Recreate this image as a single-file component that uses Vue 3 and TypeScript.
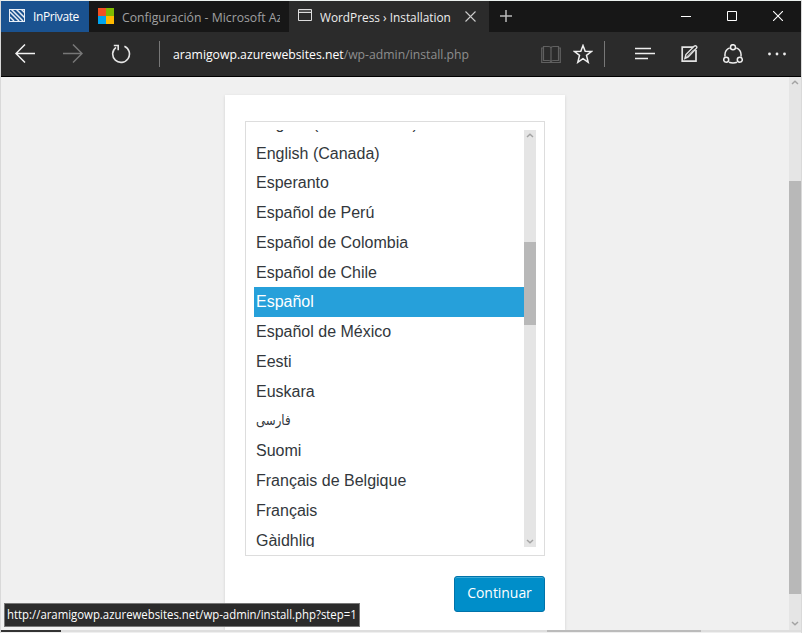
<script setup lang="ts">
interface Language {
  label: string
  kind?: 'selected' | 'arabic'
}

const languages: Language[] = [
  { label: 'English (New Zealand)' },
  { label: 'English (Canada)' },
  { label: 'Esperanto' },
  { label: 'Español de Perú' },
  { label: 'Español de Colombia' },
  { label: 'Español de Chile' },
  { label: 'Español', kind: 'selected' },
  { label: 'Español de México' },
  { label: 'Eesti' },
  { label: 'Euskara' },
  { label: 'فارسی', kind: 'arabic' },
  { label: 'Suomi' },
  { label: 'Français de Belgique' },
  { label: 'Français' },
  { label: 'Gàidhlig' },
]
</script>

<template>
  <div class="window">
    <header class="tabs">
      <div class="private">
        <svg class="hatch" width="16" height="13" viewBox="0 0 16 13">
          <rect x=".5" y=".5" width="15" height="12" fill="none" stroke="#e8eef6" />
          <path d="M1 8l4 4M1 3l9 9M2 0l12 12M7 0l9 9M12 0l4 4" stroke="#e8eef6" stroke-width="1.5" />
        </svg>
        <span>InPrivate</span>
      </div>
      <div class="tab azure">
        <div class="ms"><i class="r" /><i class="g" /><i class="b" /><i class="y" /></div>
        <div class="azure-title"><span>Configuración - Microsoft Azure</span></div>
      </div>
      <div class="tab current">
        <svg class="page-icon" width="14" height="12" viewBox="0 0 14 12" fill="none" stroke="#ddd">
          <path d="M.5 .5h13v11H.5zM0 3.5h14" /><path d="M1 2h12" stroke="#777" />
        </svg>
        <div class="title"><span>WordPress › Installation</span></div>
        <svg class="tab-close" width="11" height="11" viewBox="0 0 11 11"><path d="M.5 .5l10 10M10.500 .5l-10 10" stroke="#ccc" stroke-width="1.1" /></svg>
      </div>
      <svg class="plus" width="12" height="12" viewBox="0 0 12 12"><path d="M6 0v12M0 6h12" stroke="#bbb" stroke-width="1.5" /></svg>
      <div class="controls">
        <svg width="10" height="10" viewBox="0 0 10 10"><path d="M0 5.500h10" stroke="#fff" /></svg>
        <svg width="10" height="10" viewBox="0 0 10 10"><path d="M.5 .5h9v9h-9z" fill="none" stroke="#fff" /></svg>
        <svg width="10" height="10" viewBox="0 0 10 10"><path d="M0 0l10 10M10 0L0 10" stroke="#fff" stroke-width="1.1" /></svg>
      </div>
    </header>

    <nav class="toolbar">
      <svg class="back" width="20" height="19" viewBox="0 0 20 19" fill="none" stroke="#f2f2f2" stroke-width="1.5"><path d="M20 9.500H1M10 .5l-9 9 9 9" /></svg>
      <svg class="forward" width="20" height="19" viewBox="0 0 20 19" fill="none" stroke="#777" stroke-width="1.5"><path d="M0 9.500h19M10 .5l9 9-9 9" /></svg>
      <svg class="reload" width="20" height="20" viewBox="0 0 20 20" fill="none" stroke="#e5e5e5" stroke-width="1.6"><path d="M13.400 2.300A8.400 8.400 0 1 1 5 3.300M2.800 1.500h4.400v4.800" /></svg>
      <i class="divider first" />
      <div class="url"><span><span class="host">aramigowp.azurewebsites.net</span>/wp-admin/install.php</span></div>
      <svg class="book" width="20" height="19" viewBox="0 0 20 19" fill="none" stroke="#606060" stroke-width="1.2"><path d="M2.500 1.500h5Q10 1.500 10 3.500Q10 1.500 12.500 1.500h5v14h-5Q10 15.500 10 17.500Q10 15.500 7.500 15.500h-5zM10 3v14M2.500 3H.7v14.500h18.600V3h-1.800" /></svg>
      <svg class="star" width="20" height="20" viewBox="0 0 20 20" fill="none" stroke="#f0f0f0" stroke-width="1.5"><path d="M10 1.500l2.200 5.800 6.200.2-4.900 3.900 1.700 6.900-5.200-3.600-5.200 3.600 1.700-6.900-4.900-3.900 6.200-.2z" /></svg>
      <i class="divider second" />
      <svg class="hub" width="20" height="13" viewBox="0 0 20 13" stroke="#eee" stroke-width="1.3"><path d="M0 1.500h16M0 6.500h20M0 11.500h13" /></svg>
      <svg class="note" width="17" height="18" viewBox="0 0 17 18" fill="none" stroke="#e3e3e3"><path d="M15 5v11.200H1.200V2.200h11" stroke-width="1.7" /><path d="M3.900 13.500l1-4L13.300 1.100q1.200-.8 2.100.1t0 2L7.200 12z" stroke-width="1.4" /><path d="M5.500 12L13 4.500" /></svg>
      <svg class="share" width="20" height="20" viewBox="0 0 20 20" fill="none" stroke="#eee" stroke-width="1.5"><path d="M6.700 3.900A8 8 0 0 0 2.100 12.600M13.300 3.900a8 8 0 0 1 4.600 8.700M6 18.200q4 1.500 8 0" /><circle cx="10" cy="3.200" r="2.500" /><circle cx="3.200" cy="15.800" r="2.500" /><circle cx="16.800" cy="15.800" r="2.500" /></svg>
      <svg class="more" width="18" height="4" viewBox="0 0 18 4" fill="#eee"><circle cx="1.500" cy="2" r="1.400" /><circle cx="9" cy="2" r="1.400" /><circle cx="16.500" cy="2" r="1.400" /></svg>
    </nav>

    <main class="viewport">
      <section class="card">
        <div class="select">
          <ul class="options">
            <li v-for="language in languages" :key="language.label" :class="language.kind"><span>{{ language.label }}</span></li>
          </ul>
          <div class="bar list-bar">
            <svg width="8" height="5" viewBox="0 0 8 5"><path d="M1 4l3-2.700L7 4" fill="none" stroke="#a3a3a3" stroke-width="1.5" /></svg>
            <i class="thumb" />
            <svg class="down" width="8" height="5" viewBox="0 0 8 5"><path d="M1 1l3 2.700L7 1" fill="none" stroke="#a3a3a3" stroke-width="1.500" /></svg>
          </div>
        </div>
        <button class="continue"><span>Continuar</span></button>
      </section>
      <div class="bar page-bar">
        <svg width="8" height="5" viewBox="0 0 8 5"><path d="M1 4l3-2.700L7 4" fill="none" stroke="#a3a3a3" stroke-width="1.5" /></svg>
        <i class="thumb" />
        <svg class="down" width="8" height="5" viewBox="0 0 8 5"><path d="M1 1l3 2.700L7 1" fill="none" stroke="#a3a3a3" stroke-width="1.500" /></svg>
      </div>
    </main>
    <footer class="edge"><i class="dark" /><i class="gray" /></footer>
    <div class="status"><span>http://aramigowp.azurewebsites.net/wp-admin/install.php?step=1</span></div>
  </div>
</template>

<style>
body { margin: 0; overflow: hidden; }
</style>

<style scoped>
* { box-sizing: border-box; }
svg { display: block; flex: none; }
i { display: block; flex: none; }
.window { position: relative; display: flex; flex-direction: column; width: 802px; height: 633px; overflow: hidden; background: #efefef; border: 1px solid #d9d9d9; border-top-color: #ecf1ef; border-bottom: 0; font-family: "Open Sans", "Noto Sans", sans-serif; font-size: 13px; }
.tabs { height: 31px; flex: none; display: flex; background: #171717; color: #a0a0a0; }
.tabs span { white-space: nowrap; line-height: 33px; }
.private { width: 88px; display: flex; background: #1a5290; color: #fff; padding-left: 8px; font-size: 12px; }
.private span { letter-spacing: -.4px; line-height: 32px; }
.hatch { margin: 8px 8px 0 0; }
.tab { display: flex; width: 200px; }
.azure { padding: 0 9px 0 9px; }
.ms { display: grid; grid-template-columns: 8px 8px; grid-template-rows: 8px 8px; margin: 7px 8px 0 0; }
.r { background: #f25022; }
.g { background: #7fba00; }
.b { background: #00a4ef; }
.y { background: #ffb900; }
.azure-title { flex: 1; min-width: 0; overflow: hidden; }
.azure-title span { display: inline-block; transform: scaleX(.94); transform-origin: left; }
.current { background: #2b2b2b; color: #eee; padding-left: 9px; }
.page-icon { margin: 8px 8px 0 0; }
.title { width: 143px; flex: none; }
.title span { display: inline-block; transform: scaleX(.91); transform-origin: left; }
.tab-close { margin: 10px 0 0 2px; }
.plus { margin: 9px 0 0 11px; }
.controls { margin: 10px 18px 0 auto; display: flex; gap: 36px; }
.toolbar { height: 45px; flex: none; display: flex; align-items: flex-start; background: #2b2b2b; border-bottom: 1px solid #000; }
.back { margin: 12px 0 0 14px; }
.forward { margin: 12px 0 0 28px; }
.reload { margin: 12px 0 0 28px; }
.divider { width: 1px; height: 26px; margin-top: 9px; background: #777; }
.first { margin-left: 28px; }
.url { width: 367px; flex: none; margin-left: 13px; line-height: 45px; white-space: nowrap; color: #8e8e8e; }
.url > span { display: inline-block; transform: scaleX(.94); transform-origin: left; }
.host { color: #fff; }
.book { margin: 13px 0 0 1px; }
.star { margin: 12px 0 0 12px; }
.second { margin-left: 11px; }
.hub { margin: 15px 0 0 30px; }
.note { margin: 13px 0 0 26px; }
.share { margin: 12px 0 0 25px; }
.more { margin: 20px 0 0 25px; }
.viewport { height: 553px; flex: none; display: flex; padding-left: 224px; background: #f0f0f0; }
.card { width: 340px; height: 535px; margin-top: 18px; padding: 26px 20px 0; background: #fff; box-shadow: 0 1px 3px rgba(0,0,0,.13); display: flex; flex-direction: column; align-items: flex-end; clip-path: inset(-3px -4px 0); }
.select { width: 300px; height: 435px; border: 1px solid #ddd; padding: 8px; display: flex; }
.options { flex: 1; height: 417px; overflow: hidden; list-style: none; margin: 0; padding: 0; font: 16px/29.76px "Liberation Sans", Arial, sans-serif; color: #32373c; }
.options li { height: 29.76px; padding-left: 2px; }
.options li:first-child { margin-top: -21.1px; }
.options li:last-child { padding-top: .6px; }
.options .selected { background: #26a0da; color: #fff; }
.arabic { font-family: "DejaVu Sans", sans-serif; font-size: 14px; }
.arabic span { display: inline-block; transform: scaleX(.84); transform-origin: left; }
.bar { width: 12px; background: #e5e5e5; display: flex; flex-direction: column; align-items: center; padding: 3px 0; }
.bar .thumb { width: 12px; background: #b8b8b8; }
.down { margin-top: auto; }
.list-bar { height: 417px; }
.list-bar .thumb { height: 83px; margin-top: 104px; }
.page-bar { margin-left: auto; padding-bottom: 4px; }
.page-bar .thumb { height: 413px; margin-top: 96px; }
.continue { width: 91px; height: 36px; margin: 20px 0 0; padding: 0 0 2px 0; background: #008ec9; border: 1px solid #0073aa; border-radius: 3px; box-shadow: inset 0 1px 0 rgba(120,200,230,.5); color: #fff; font: 14px/32px "Open Sans", sans-serif; letter-spacing: -.05px; }
.edge { height: 2px; flex: none; display: flex; justify-content: space-between; background: #dedede; }
.edge .dark { width: 60px; height: 2px; background: #333; }
.edge .gray { width: 154px; height: 2px; margin-right: 100px; background: #bbb; }
.status { position: absolute; left: 3px; top: 602px; width: 356px; height: 24px; background: #2b2b2b; border: 1px solid #777; color: #fff; padding-left: 2px; font-size: 12px; line-height: 22px; white-space: nowrap; }
.status span { display: inline-block; transform: scaleX(.948); transform-origin: left; }
</style>
